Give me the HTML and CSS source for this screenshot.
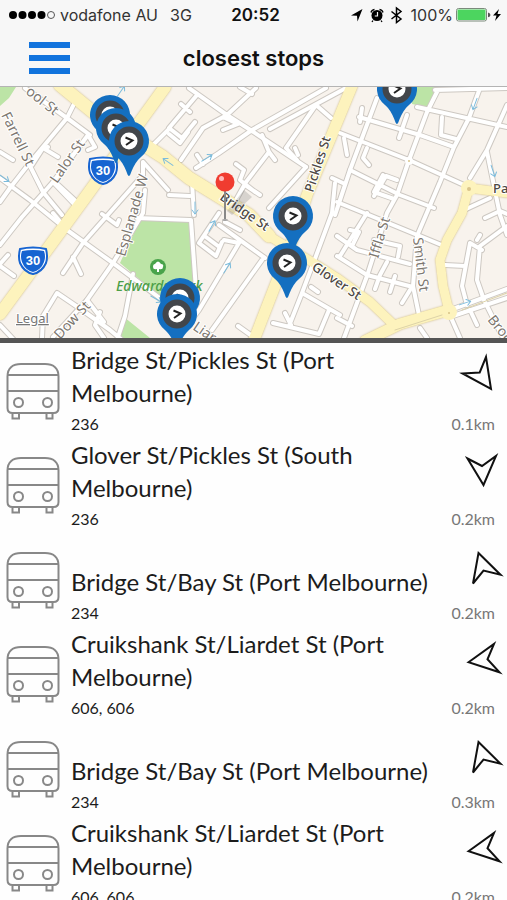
FILE: index.html
```html
<!DOCTYPE html>
<html lang="en">
<head>
<meta charset="utf-8">
<meta name="viewport" content="width=device-width, initial-scale=1">
<title>closest stops</title>
<link rel="stylesheet" href="styles.css">
</head>
<body>
<svg class="defs" aria-hidden="true">
  <defs>
    <symbol id="bus" viewBox="0 0 54 58">
      <path d="M1.500 14.500C1.500 6 7 2 15 2H39C47 2 52.500 6 52.500 14.500V46Q52.500 51 47.500 51H6.500Q1.500 51 1.500 46ZM1.500 13H52.500M1.500 29H52.500M6.500 51V56.500H13V51M40.500 51V56.500H46.500V51"/>
      <circle cx="12.500" cy="40.500" r="4.500"/><circle cx="41.500" cy="40.500" r="4.500"/>
    </symbol>
  </defs>
</svg>

<header class="top">
  <div class="status">
    <div class="status-left">
      <svg class="signal" viewBox="0 0 47 10" aria-hidden="true"><circle cx="4" cy="5" r="4"/><circle cx="13.500" cy="5" r="4"/><circle cx="23" cy="5" r="4"/><circle cx="32.500" cy="5" r="4"/><circle class="empty" cx="42" cy="5" r="3.500"/></svg>
      <span>vodafone AU</span>
      <span class="network">3G</span>
    </div>
    <time class="clock">20:52</time>
    <div class="status-right">
      <svg class="status-icons" viewBox="0 0 54 18" aria-hidden="true">
        <path d="M12.500 3 1 9.500 7 9.800 7.500 15.500Z"/>
        <circle cx="27" cy="9.500" r="5.500"/>
        <path d="M21 6.500Q21.500 4 24.500 3.500M33 6.500Q32.500 4 29.500 3.500M23 14.500 22 16M31 14.500 32 16" fill="none" stroke="#000" stroke-width="1.300"/>
        <path d="M27.500 6V10H24.800" fill="none" stroke="#f7f7f7" stroke-width="1.200"/>
        <path d="M41.500 5.500 51 13 46.500 16.500V2L51 5.500 41.500 13" fill="none" stroke="#000" stroke-width="1.500"/>
      </svg>
      <span>100%</span>
      <svg class="battery" viewBox="0 0 46 14" aria-hidden="true">
        <rect x=".5" y=".5" width="30" height="12.500" rx="2" fill="#f7f7f7" stroke="#7b8a7b"/>
        <rect x="1.500" y="1.500" width="28" height="10.500" rx="1" fill="#4cd55f"/>
        <path d="M32 4.500Q34.500 5 34.500 7T32 9.300Z" fill="#555"/>
        <path d="M43 1 37 7.500H40.500L39 13 45 6H41.500Z"/>
      </svg>
    </div>
  </div>
  <div class="bar">
    <button class="menu" type="button" aria-label="Menu">
      <svg viewBox="0 0 41 34" aria-hidden="true"><path d="M0 1H41V7H0ZM0 14H41V20H0ZM0 27H41V33H0Z"/></svg>
    </button>
    <h1>closest stops</h1>
  </div>
</header>

<main>
<section class="map" aria-label="Map of stops">
<svg viewBox="0 87 507 251" preserveAspectRatio="xMidYMid slice">
  <defs>
    <g id="streets">
      <path d="M25 88 67 118 90 135M78 96 67 118 28 165 10 188 0 202M88 135 53 182 22 217 0 245M0 178 30 200 67 230 113 263 165 302"/>
      <path d="M28 162 43 192 62 215M43 148 58 157M0 152 13 160M88 135 95 147 88 150M55 182 80 205M48 147 43 148 32 165"/>
      <path d="M170 128 150 148M143 162 168 190M143 162 143 175 128 192 83 243 63 273M73 257 81 274M145 190 143 213 113 263 87 300 53 337M102 214 117 225 119 220"/>
      <path d="M53 182 75 205M8 255 0 264M0 266 14 276M53 213 67 230M42 338 43 316 57 293 82 310 110 330 122 340M87 300 104 322M100 312 95 325 104 338M133 274 125 316 117 340M0 325 14 340"/>
      <path d="M189 88 227 115 252 131 306 167M326 88 252 130 219 153 196 168M346 88 270 129M256 88 227 115 203 128 181 160M197 95 169 128 182 138 195 122M181 104 190 112M225 118 238 124 223 130M169 134 180 143 188 132M197 155 203 164M240 87 252 94"/>
      <path d="M262 135 269 152 246 182 236 200M269 152 275 160M316 105 286 148 297 160M316 105 331 118M306 167 269 208M236 164 244 170 240 180 255 192M245 185 260 195M192 182 194 215M169 195 190 196M295 148 298 155"/>
      <path d="M137 218 191 220 196 290M219 213 199 243 216 256 222 242M206 237 218 246M219 225 265 258M224 240 239 243 199 310 180 335M262 260 212 330M225 222 240 230"/>
      <path d="M340 133 409 160 464 185M359 117 420 135 454 147M377 98 350 170 335 215M417 107 507 127M437 92 427 112 409 160 397 195 387 213 367 276 344 338M480 88 469 118 454 147 440 182 417 236 413 286 420 320M507 105 487 150 470 178M487 152 500 215 507 235M435 90 507 88"/>
      <path d="M350 170 400 195 434 208M337 202 364 213 444 246M399 138 407 115M442 117 441 135 456 139M367 148 363 158 369 165M383 175 374 192 394 199M362 108 360 122M344 138 347 155M374 196 386 176 397 180M464 210 490 198M332 178 345 184"/>
      <path d="M337 236 357 250 410 264M337 256 367 275 413 287M367 213 340 256M350 230 359 232 352 246M374 240 400 246 398 257M387 262 380 275 375 289M395 276 390 292M410 290 402 303M337 318 352 326"/>
      <path d="M445 265 465 266M470 243 462 286 467 305M507 226 480 246 477 280 484 300 503 338M470 243 482 250M485 218 500 211 507 214M470 310 477 325M449 313 460 338M420 328 427 338M477 240 480 235"/>
      <path d="M332 213 316 256 302 293 289 326M302 293 340 315M273 323 319 334 329 310M238 326 252 336M311 287 318 292M285 313 291 325M335 183 332 213"/>
      <path d="M453 316 507 298M453 309 507 289"/>
    </g>
    <g id="avenues">
      <path d="M165 87 87 195 0 314" stroke-width="12"/>
      <path d="M60 85 93 112 163 157 189 178 249 215 269 236" stroke-width="13"/>
      <path d="M269 236 312 262 337 278 370 302 394 325" stroke-width="9"/>
      <path d="M352 86 307 195 289 250 254 340" stroke-width="11"/>
      <path d="M365 341 400 324 449 310" stroke-width="11"/>
      <path d="M469 187 462 213 447 240 440 260 443 286 449 311M469 188 507 193" stroke-width="9"/>
    </g>
    <g id="pin">
      <path d="M0 35C-2 35-3 24-12 16A20 20 0 1 1 12 16C3 24 2 35 0 35Z" fill="#146fc0"/>
      <circle r="11.500" fill="#fff" stroke="#42464b" stroke-width="6"/>
      <path d="M-3.500-3.500 3.500-.5-3 4" fill="none" stroke="#222" stroke-width="2"/>
    </g>
    <g id="shield">
      <path d="M-13-11Q0-14 13-11Q15-3 13 3Q9 12 0 14Q-9 12-13 3Q-15-3-13-11Z" fill="#fff" stroke="#1764d1" stroke-width="2"/>
      <path d="M-11-9Q0-11 11-9Q13-3 11 2Q8 10 0 12Q-8 10-11 2Q-13-3-11-9Z" fill="#1764d1"/>
      <text class="route" y="5">30</text>
    </g>
    <path id="oneway" d="M-6 0H6M2-3 6 0 2 3"/>
  </defs>
  <rect y="80" width="507" height="265" fill="#f8f3ed"/>
  <g fill="#bce4a6">
    <path d="M0 87H16L9 98 0 106ZM141 218 191 220 195 300 170 305 120 263ZM124 317 150 338H117ZM413 87H436L431 108 412 104ZM163 303 180 330 158 318Z"/>
  </g>
  <use href="#streets" class="casing"/>
  <use href="#avenues" class="avenue-edge"/>
  <use href="#streets" class="street"/>
  <use href="#avenues" class="avenue"/>
  <circle cx="469" cy="188" r="8" fill="#fdf3bd"/><circle cx="469" cy="189" r="2" class="island"/>
  <circle cx="449" cy="312" r="8" fill="#fdf3bd"/><circle cx="449" cy="313" r="1" class="island"/>
  <circle cx="409" cy="161" r="4" fill="#fff"/><circle cx="409" cy="161" r="1" class="island"/>
  <path class="median" d="M395 330 442 315M462 310 507 293"/>
  <g class="arrows">
    <use href="#oneway" transform="translate(168 162) rotate(215)"/>
    <use href="#oneway" transform="translate(207 158) rotate(-32)"/>
    <use href="#oneway" transform="translate(4 178) rotate(35)"/>
    <use href="#oneway" transform="translate(227 268) rotate(-58)"/>
    <use href="#oneway" transform="translate(212 226) rotate(-60)"/>
    <use href="#oneway" transform="translate(475 104) rotate(110)"/>
    <use href="#oneway" transform="translate(493 171) rotate(72)"/>
    <use href="#oneway" transform="translate(465 303) rotate(-18)"/>
    <use href="#oneway" transform="translate(195 208) rotate(90)"/>
    <use href="#oneway" transform="translate(121 91) rotate(-55)"/>
    <use href="#oneway" transform="translate(156 299) rotate(30)"/>
  </g>
  <g class="label">
    <text transform="translate(25 93) rotate(38)">ool St</text>
    <text transform="translate(1 115) rotate(64)">Farrell St</text>
    <text transform="translate(57 184) rotate(-55)">Lalor St</text>
    <text transform="translate(125 257) rotate(-74)">Esplanade W</text>
    <text transform="translate(60 340) rotate(-47)">Dow St</text>
    <text transform="translate(378 259) rotate(-73)">Iffla St</text>
    <text transform="translate(413 238) rotate(83)">Smith St</text>
    <text transform="translate(487 320) rotate(51)">Broo</text>
    <text transform="translate(192 329) rotate(34)">Liar</text>
  </g>
  <g class="label main-label">
    <text transform="translate(219 199) rotate(35)">Bridge St</text>
    <text transform="translate(313 193) rotate(-72)">Pickles St</text>
    <text transform="translate(311 269) rotate(34)">Glover St</text>
    <text x="493" y="193">Pa</text>
  </g>
  <circle cx="158" cy="267" r="8" fill="#49a34b"/>
  <path d="M157 272V269Q153 270 153 267Q153 264 155 264Q158 259 161 264Q164 264 163 267Q163 270 159 269V272Z" fill="#fff"/>
  <text class="park-label" x="116" y="291">Edwards Park</text>
  <text class="legal" x="16" y="323">Legal</text>
  <use href="#shield" transform="translate(103 170)"/>
  <use href="#shield" transform="translate(33 260)"/>
  <path d="M227 211 244 190 252 197 232 215Z" fill="#555" opacity=".2"/>
  <path d="M225 190V221" stroke="#888" stroke-width="2"/><ellipse cx="225" cy="220" rx="3" ry="1" fill="#aaa"/>
  <circle cx="225" cy="182" r="9.500" fill="#f03c30"/><circle cx="221.500" cy="178.500" r="2.500" fill="#fbb"/>
  <use href="#pin" transform="translate(110 115)"/>
  <use href="#pin" transform="translate(116 128)"/>
  <use href="#pin" transform="translate(129 141)"/>
  <use href="#pin" transform="translate(397 89)"/>
  <use href="#pin" transform="translate(293 216)"/>
  <use href="#pin" transform="translate(287 263)"/>
  <use href="#pin" transform="translate(180 298)"/>
  <use href="#pin" transform="translate(177 314)"/>
</svg>
</section>

<ul class="stops">
  <li class="stop">
    <svg class="bus" aria-hidden="true"><use href="#bus"/></svg>
    <div class="info"><h2>Bridge St/Pickles St (Port Melbourne)</h2><p>236</p></div>
    <div class="where"><svg class="heading" viewBox="0 0 48 50" aria-hidden="true"><path d="M3.500 25.500 20.700 24.500 27 9 32 41Z"/></svg><span>0.1km</span></div>
  </li>
  <li class="stop">
    <svg class="bus" aria-hidden="true"><use href="#bus"/></svg>
    <div class="info"><h2>Glover St/Pickles St (South Melbourne)</h2><p>236</p></div>
    <div class="where"><svg class="heading" viewBox="0 0 48 50" aria-hidden="true"><path d="M8.500 16.500 23 24 37 14 24.500 43Z"/></svg><span>0.2km</span></div>
  </li>
  <li class="stop">
    <svg class="bus" aria-hidden="true"><use href="#bus"/></svg>
    <div class="info"><h2>Bridge St/Bay St (Port Melbourne)</h2><p>234</p></div>
    <div class="where"><svg class="heading" viewBox="0 0 48 50" aria-hidden="true"><path d="M19.500 16 41.500 37.700 24.500 33.500 14 46.500Z"/></svg><span>0.2km</span></div>
  </li>
  <li class="stop">
    <svg class="bus" aria-hidden="true"><use href="#bus"/></svg>
    <div class="info"><h2>Cruikshank St/Liardet St (Port Melbourne)</h2><p>606, 606</p></div>
    <div class="where"><svg class="heading" viewBox="0 0 48 50" aria-hidden="true"><path d="M9.500 31.200 35 13 28.500 28.300 40.500 41.300Z"/></svg><span>0.2km</span></div>
  </li>
  <li class="stop">
    <svg class="bus" aria-hidden="true"><use href="#bus"/></svg>
    <div class="info"><h2>Bridge St/Bay St (Port Melbourne)</h2><p>234</p></div>
    <div class="where"><svg class="heading" viewBox="0 0 48 50" aria-hidden="true"><path d="M19.500 16 41.500 37.700 24.500 33.500 14 46.500Z"/></svg><span>0.3km</span></div>
  </li>
  <li class="stop">
    <svg class="bus" aria-hidden="true"><use href="#bus"/></svg>
    <div class="info"><h2>Cruikshank St/Liardet St (Port Melbourne)</h2><p>606, 606</p></div>
    <div class="where"><svg class="heading" viewBox="0 0 48 50" aria-hidden="true"><path d="M9.500 31.200 35 13 28.500 28.300 40.500 41.300Z"/></svg><span>0.2km</span></div>
  </li>
</ul>
</main>
</body>
</html>
```
FILE: styles.css
```css
* { box-sizing: border-box; }

body {
  margin: 0;
  height: 100vh;
  display: flex;
  flex-direction: column;
  overflow: hidden;
  background: #fefefe;
  color: #1c1c1c;
  font-family: Lato, "Liberation Sans", sans-serif;
}

h1, h2, p, ul { margin: 0; padding: 0; font-weight: 400; }
svg { display: block; flex: none; }
.defs { position: absolute; width: 0; height: 0; }

/* Header */
.top {
  background: #f7f7f7;
  border-bottom: 1px solid #b4b4b4;
  font-family: Inter, "Liberation Sans", sans-serif;
}
.status {
  display: grid;
  grid-template-columns: 1fr auto 1fr;
  align-items: center;
  height: 29px;
  padding: 0 5px 0 9px;
  font-size: 16px;
  color: #333;
}
.status-left, .status-right { display: flex; align-items: center; }
.status-left { gap: 4px; }
.status-right { justify-content: flex-end; gap: 3px; }
.network { margin-left: 8px; }
.clock { font-size: 17px; font-weight: 600; color: #111; }
.signal { width: 47px; height: 10px; }
.signal .empty { fill: none; stroke: #555; }
.status-icons { width: 54px; height: 18px; margin-right: 4px; }
.battery { width: 46px; height: 14px; }

.bar {
  display: grid;
  grid-template-columns: 1fr auto 1fr;
  align-items: center;
  height: 57px;
}
.menu {
  justify-self: start;
  margin-left: 29px;
  padding: 0;
  border: 0;
  background: none;
}
.menu svg { width: 41px; height: 34px; fill: #1173dd; }
h1 { font-size: 22px; font-weight: 600; color: #111; }

main { flex: 1; min-height: 0; display: flex; flex-direction: column; }

/* Map */
.map { flex: none; border-bottom: 5px solid #555; }
.map svg { width: 100%; height: 251px; }
.casing, .street, .avenue-edge, .avenue, .median, .arrows {
  fill: none;
  stroke-linejoin: round;
  stroke-linecap: round;
}
.casing { stroke: #cdc8c2; stroke-width: 6px; }
.street { stroke: #fff; stroke-width: 4px; }
.avenue-edge { stroke: #e6d6a0; }
.avenue { stroke: #fdf3bd; }
.avenue-edge { filter: drop-shadow(0 0 1px #cdb980); }
.median { stroke: #ddd3a8; stroke-width: 1px; }
.arrows { stroke: #7cbcdc; stroke-width: 1px; }
.island { fill: #d9c48a; }
.label { font: 14px "Noto Sans", sans-serif; fill: #7d7770; stroke: #fff; stroke-width: 2px; paint-order: stroke; }
.main-label { font-weight: 500; font-size: 13px; fill: #4d4843; }
.park-label { font: italic 500 14px "Noto Sans", sans-serif; fill: #4c9f48; }
.legal { font: 13px "Noto Sans", sans-serif; fill: #777; text-decoration: underline; stroke: #fff; stroke-width: 2px; paint-order: stroke; }
.route { font: bold 13px "Liberation Sans", sans-serif; fill: #fff; text-anchor: middle; }

/* Stop list */
.stops { flex: 1; min-height: 0; overflow: hidden; list-style: none; }
.stop { display: flex; height: 94px; }
.stop:nth-child(even) { height: 95px; }
.bus {
  width: 54px;
  height: 58px;
  margin: 19px 11px 0 6px;
  fill: none;
  stroke: #888;
  stroke-width: 2px;
}
.info { flex: 1; display: flex; flex-direction: column; justify-content: flex-end; }
h2 { font-size: 24px; line-height: 33px; }
p { padding-top: 2px; font-size: 16px; line-height: 26px; }
.where {
  flex: none;
  width: 48px;
  display: flex;
  flex-direction: column;
  justify-content: space-between;
  padding-top: 5px;
  font-size: 16px;
  line-height: 26px;
  color: #777;
}
.where span { align-self: flex-end; margin-right: 12px; }
.heading { width: 48px; height: 50px; fill: none; stroke: #111; stroke-width: 2px; }
```
